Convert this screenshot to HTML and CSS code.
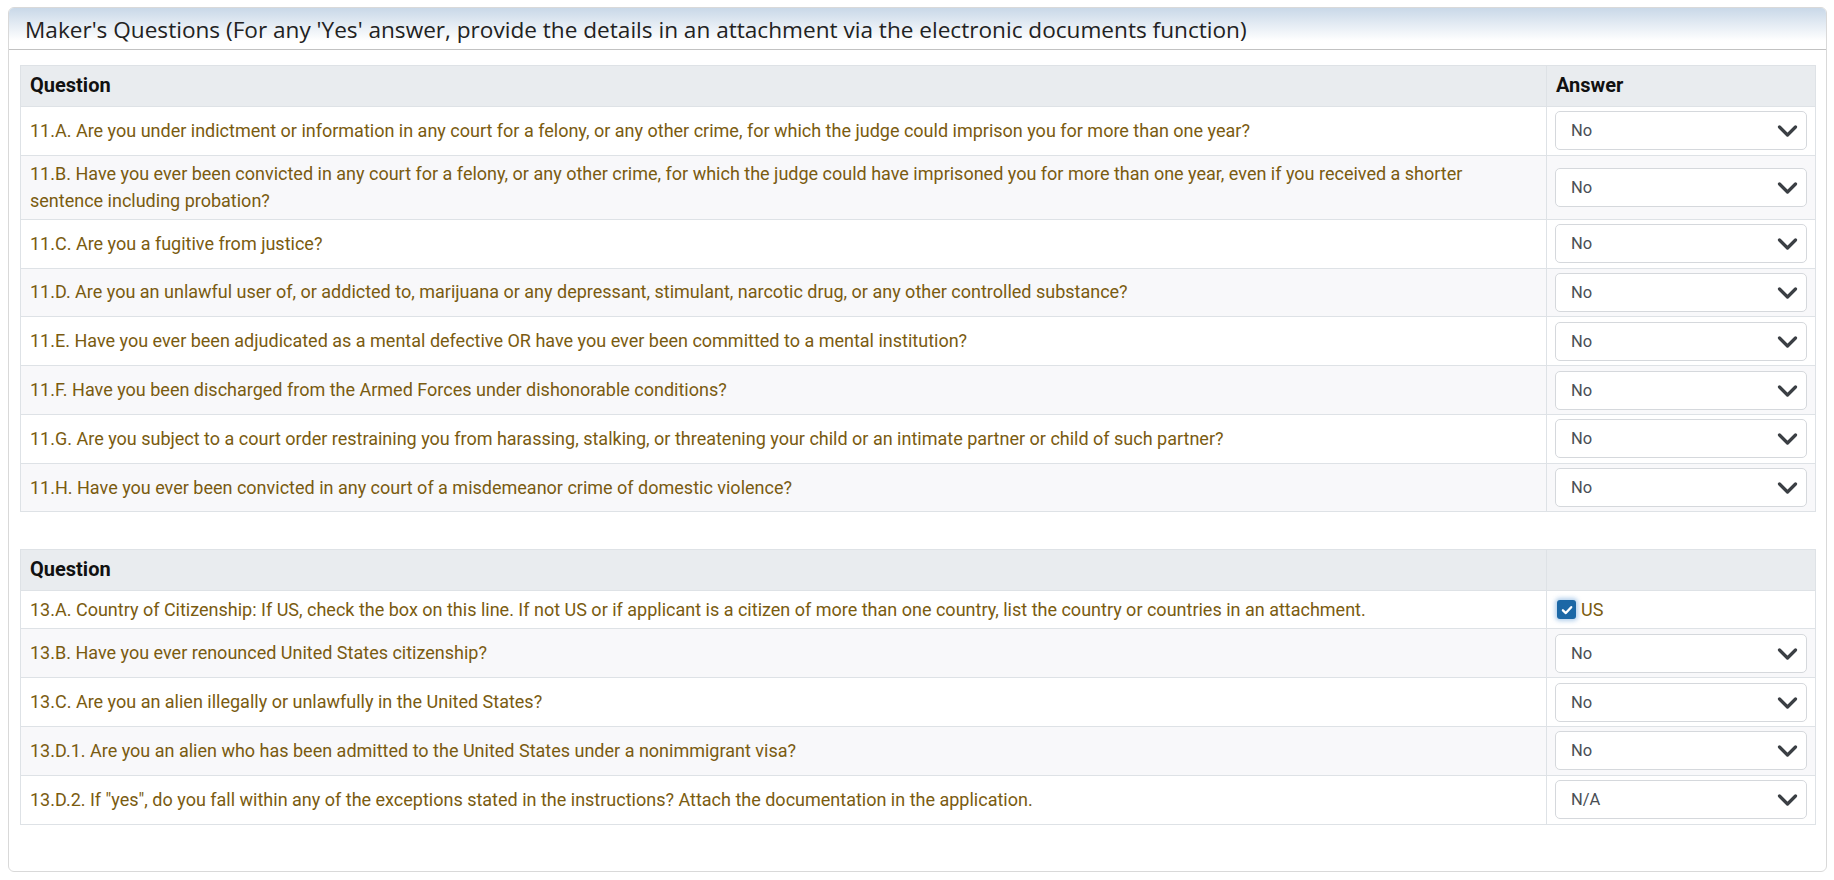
FILE: index.html
```html
<!DOCTYPE html>
<html lang="en">
<head>
    <meta charset="UTF-8">
    <title>Maker's Questions</title>
    <link rel="stylesheet" href="styles.css">
</head>
<body>
    <div class="panel">
        <div class="panel-heading">
            <h2>Maker's Questions (For any 'Yes' answer, provide the details in an attachment via the electronic documents function)</h2>
        </div>

        <div class="panel-body">
            <table class="questions">
                <colgroup>
                    <col>
                    <col class="answer-col">
                </colgroup>
                <thead>
                    <tr>
                        <th>Question</th>
                        <th>Answer</th>
                    </tr>
                </thead>
                <tbody>
                    <tr>
                        <td>11.A. Are you under indictment or information in any court for a felony, or any other crime, for which the judge could imprison you for more than one year?</td>
                        <td class="answer"><div class="select-wrap"><select><option>No</option><option>Yes</option></select><svg class="chevron" viewBox="0 0 20 12"><polyline points="2,2 10,10 18,2"/></svg></div></td>
                    </tr>
                    <tr>
                        <td>11.B. Have you ever been convicted in any court for a felony, or any other crime, for which the judge could have imprisoned you for more than one year, even if you received a shorter sentence including probation?</td>
                        <td class="answer"><div class="select-wrap"><select><option>No</option><option>Yes</option></select><svg class="chevron" viewBox="0 0 20 12"><polyline points="2,2 10,10 18,2"/></svg></div></td>
                    </tr>
                    <tr>
                        <td>11.C. Are you a fugitive from justice?</td>
                        <td class="answer"><div class="select-wrap"><select><option>No</option><option>Yes</option></select><svg class="chevron" viewBox="0 0 20 12"><polyline points="2,2 10,10 18,2"/></svg></div></td>
                    </tr>
                    <tr>
                        <td>11.D. Are you an unlawful user of, or addicted to, marijuana or any depressant, stimulant, narcotic drug, or any other controlled substance?</td>
                        <td class="answer"><div class="select-wrap"><select><option>No</option><option>Yes</option></select><svg class="chevron" viewBox="0 0 20 12"><polyline points="2,2 10,10 18,2"/></svg></div></td>
                    </tr>
                    <tr>
                        <td>11.E. Have you ever been adjudicated as a mental defective OR have you ever been committed to a mental institution?</td>
                        <td class="answer"><div class="select-wrap"><select><option>No</option><option>Yes</option></select><svg class="chevron" viewBox="0 0 20 12"><polyline points="2,2 10,10 18,2"/></svg></div></td>
                    </tr>
                    <tr>
                        <td>11.F. Have you been discharged from the Armed Forces under dishonorable conditions?</td>
                        <td class="answer"><div class="select-wrap"><select><option>No</option><option>Yes</option></select><svg class="chevron" viewBox="0 0 20 12"><polyline points="2,2 10,10 18,2"/></svg></div></td>
                    </tr>
                    <tr>
                        <td>11.G. Are you subject to a court order restraining you from harassing, stalking, or threatening your child or an intimate partner or child of such partner?</td>
                        <td class="answer"><div class="select-wrap"><select><option>No</option><option>Yes</option></select><svg class="chevron" viewBox="0 0 20 12"><polyline points="2,2 10,10 18,2"/></svg></div></td>
                    </tr>
                    <tr>
                        <td>11.H. Have you ever been convicted in any court of a misdemeanor crime of domestic violence?</td>
                        <td class="answer"><div class="select-wrap"><select><option>No</option><option>Yes</option></select><svg class="chevron" viewBox="0 0 20 12"><polyline points="2,2 10,10 18,2"/></svg></div></td>
                    </tr>
                </tbody>
            </table>

            <table class="questions">
                <colgroup>
                    <col>
                    <col class="answer-col">
                </colgroup>
                <thead>
                    <tr>
                        <th>Question</th>
                        <th></th>
                    </tr>
                </thead>
                <tbody>
                    <tr>
                        <td>13.A. Country of Citizenship: If US, check the box on this line. If not US or if applicant is a citizen of more than one country, list the country or countries in an attachment.</td>
                        <td class="answer check-cell">
                            <label class="check">
                                <span class="box"><svg viewBox="0 0 12 12"><polyline points="2.5,6.3 5,8.6 9.6,3.6"/></svg></span>
                                US
                            </label>
                        </td>
                    </tr>
                    <tr>
                        <td>13.B. Have you ever renounced United States citizenship?</td>
                        <td class="answer"><div class="select-wrap"><select><option>No</option><option>Yes</option></select><svg class="chevron" viewBox="0 0 20 12"><polyline points="2,2 10,10 18,2"/></svg></div></td>
                    </tr>
                    <tr>
                        <td>13.C. Are you an alien illegally or unlawfully in the United States?</td>
                        <td class="answer"><div class="select-wrap"><select><option>No</option><option>Yes</option></select><svg class="chevron" viewBox="0 0 20 12"><polyline points="2,2 10,10 18,2"/></svg></div></td>
                    </tr>
                    <tr>
                        <td>13.D.1. Are you an alien who has been admitted to the United States under a nonimmigrant visa?</td>
                        <td class="answer"><div class="select-wrap"><select><option>No</option><option>Yes</option></select><svg class="chevron" viewBox="0 0 20 12"><polyline points="2,2 10,10 18,2"/></svg></div></td>
                    </tr>
                    <tr>
                        <td>13.D.2. If "yes", do you fall within any of the exceptions stated in the instructions? Attach the documentation in the application.</td>
                        <td class="answer"><div class="select-wrap"><select><option>N/A</option><option>No</option><option>Yes</option></select><svg class="chevron" viewBox="0 0 20 12"><polyline points="2,2 10,10 18,2"/></svg></div></td>
                    </tr>
                </tbody>
            </table>
        </div>
    </div>
</body>
</html>
```

FILE: styles.css
```css
body{
    margin: 7px 7px 0 8px;
    font-family: Roboto, 'Liberation Sans', sans-serif;
    background-color: #fff;
    color: #212529;
}
.panel{
    border: 1px solid #d9d9d9;
    border-radius: 6px;
    overflow: hidden;
}
.panel-heading{
    background: linear-gradient(#c9d8e8, #fff 80%);
    border-bottom: 1px solid #c2c2c2;
    padding: 7px 16px 4px;
}
.panel-heading h2{
    margin: 0;
    font-family: 'Open Sans', sans-serif;
    font-weight: 400;
    font-size: 22.6px;
    line-height: 30px;
    color: #222;
}
.panel-body{
    padding: 15px 10px 9px 11px;
}
.questions{
    width: 100%;
    border-collapse: collapse;
    margin-bottom: 37px;
    font-size: 18px;
    line-height: 27px;
}
.answer-col{
    width: 269px;
}
.questions th{
    background-color: #e9ecef;
    border: 1px solid #dee2e6;
    text-align: left;
    font-size: 20px;
    font-weight: 700;
    color: #111;
    padding: 6px 9px 7px;
}
.questions td{
    border: 1px solid #dee2e6;
    color: #7a5b10;
    padding: 4px 9px 5px;
    vertical-align: middle;
}
.questions tbody tr:nth-child(even) td{
    background-color: #f8f8fa;
}
.questions td.answer{
    padding: 4.4px 8px;
}
.select-wrap{
    position: relative;
}
.select-wrap select{
    appearance: none;
    -webkit-appearance: none;
    width: 100%;
    height: 39px;
    border: 1px solid #d5d8dc;
    border-radius: 5px;
    background-color: #fff;
    font-family: Roboto, 'Liberation Sans', sans-serif;
    font-size: 16.5px;
    color: #4a4f55;
    padding: 0 40px 0 15px;
    outline: none;
}
.chevron{
    position: absolute;
    right: 9px;
    top: 14px;
    width: 21px;
    height: 12px;
    pointer-events: none;
}
.chevron polyline{
    fill: none;
    stroke: #3b3f44;
    stroke-width: 3.2;
    stroke-linecap: round;
    stroke-linejoin: round;
}
.questions td.check-cell{
    padding: 5px 8px 5px 10px;
}
.check{
    display: flex;
    align-items: center;
    gap: 5px;
    color: #7a5b10;
}
.box{
    width: 19px;
    height: 19px;
    border-radius: 3px;
    background-color: #1c68a6;
    box-shadow: 0 0 4px 2px rgba(40, 120, 200, 0.35);
    display: flex;
    align-items: center;
    justify-content: center;
}
.box svg{
    width: 14px;
    height: 14px;
}
.box polyline{
    fill: none;
    stroke: #fff;
    stroke-width: 2;
    stroke-linecap: round;
    stroke-linejoin: round;
}
```
